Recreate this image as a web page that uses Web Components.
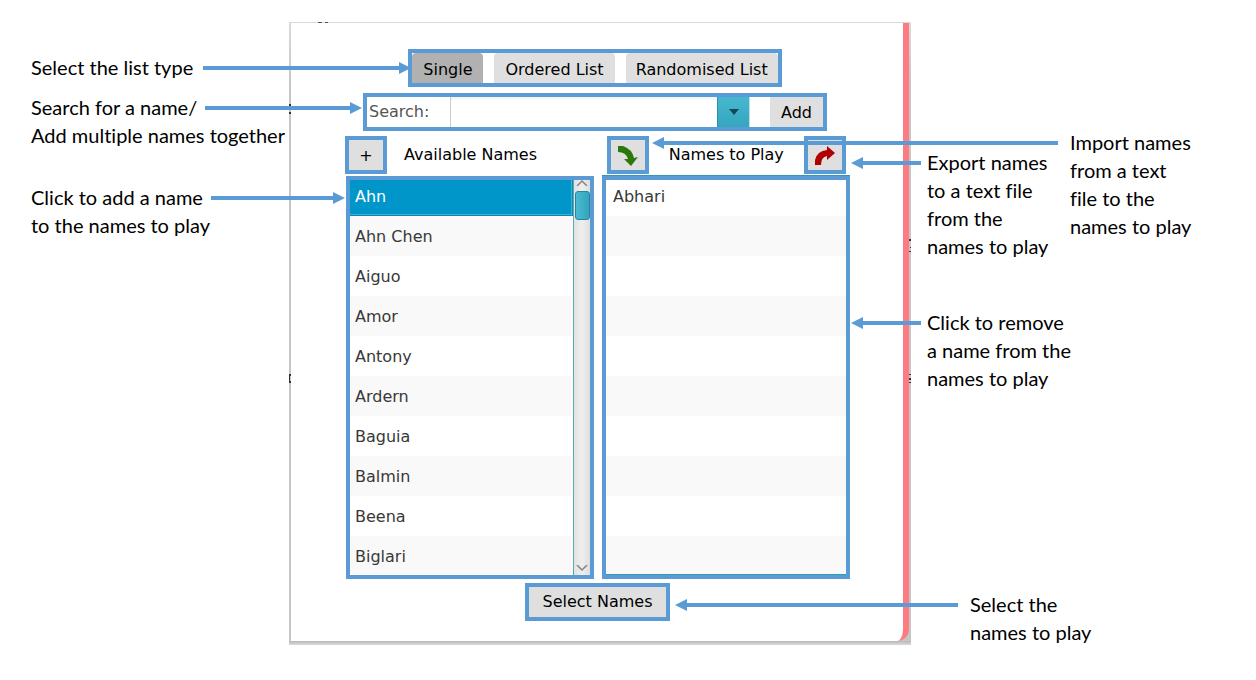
<!DOCTYPE html>
<html lang="en">
<head>
<meta charset="utf-8">
<title>Names list guide</title>
<style>
  body { margin: 0; background: #fff; }
</style>
</head>
<body>
<guide-page></guide-page>

<script>
const define = (name, html) => {
  const template = document.createElement('template');
  template.innerHTML = html;
  customElements.define(name, class extends HTMLElement {
    constructor() {
      super();
      this.attachShadow({ mode: 'open' }).append(template.content.cloneNode(true));
    }
  });
};

/* Blue outline drawn round an annotated part of the dialog */
define('high-light', `
  <style>
    :host { display: flex; box-sizing: border-box; border: 4px solid #5b9bd5; }
  </style>
  <slot></slot>`);

/* Grey flat button */
define('flat-button', `
  <style>
    :host { display: flex; }
    button {
      flex: 1; display: flex; align-items: center; justify-content: center;
      box-sizing: border-box; height: 30px; margin: 0; border: 0; padding: var(--drop, 2px) var(--pad, 11px) 0;
      background: var(--fill, #dfdfdf); color: #000; border-radius: var(--radius, 0);
      font: 16px/20px "DejaVu Sans", sans-serif; white-space: nowrap;
    }
  </style>
  <button type="button"><slot></slot></button>`);

/* Text note whose arrow leaves from its first line */
customElements.define('call-out', class extends HTMLElement {
  connectedCallback() {
    const length = Number(this.getAttribute('length'));
    const left = this.getAttribute('to') === 'left';
    const gap = Number(this.getAttribute('gap') || 12);
    this.attachShadow({ mode: 'open' }).innerHTML = `
      <style>
        :host { display: block; color: #000; font: 20px/28px Lato, sans-serif; font-variant-ligatures: none; white-space: nowrap; }
        .first { position: relative; display: inline-block; vertical-align: top; }
        svg { position: absolute; top: 8px; ${left ? 'right' : 'left'}: calc(100% + ${gap}px); ${left ? 'transform: scaleX(-1);' : ''} }
      </style>
      <div class="first"><slot name="first"></slot>
        <svg width="${length}" height="14" fill="#5b9bd5" aria-hidden="true">
          <path d="M0 5H${length - 12}V1L${length} 7L${length - 12} 13V9H0Z"/>
        </svg>
      </div>
      <div><slot></slot></div>`;
  }
});

define('list-tabs', `
  <style>
    :host { display: block; }
    high-light { gap: 11px; }
    flat-button { --radius: 4px 4px 0 0; --drop: 4px; }
    flat-button:last-child { --pad: 10px; }
    .on { --fill: #b1b1b1; }
  </style>
  <high-light>
    <flat-button class="on">Single</flat-button>
    <flat-button>Ordered List</flat-button>
    <flat-button>Randomised List</flat-button>
  </high-light>`);

define('search-bar', `
  <style>
    :host { display: block; width: 464px; max-width: 100%; }
    label { width: 83px; padding: 0 2px; box-sizing: border-box; color: #555; font: 16px/30px "DejaVu Sans", sans-serif; }
    input {
      flex: 1; min-width: 0; height: 30px; box-sizing: border-box; border: 0; border-left: 1px solid #ccc;
      background: linear-gradient(#f2f2f2, #fff 4px); font: 16px/20px "DejaVu Sans", sans-serif; outline: 0; border-radius: 0;
    }
    .drop {
      width: 33px; height: 30px; margin-right: 20px; padding: 0; border: 0; border-left: 1px solid #1e97a8; border-right: 1px solid #b9dfe6;
      background: linear-gradient(#45b8d0, #36a5be); display: flex; align-items: center; justify-content: center;
    }
  </style>
  <high-light>
    <label for="name">Search:</label>
    <input id="name" type="text">
    <button class="drop" type="button" aria-label="Show names">
      <svg width="10" height="6" aria-hidden="true"><path d="M0 0H10L5 6Z" fill="#154951"/></svg>
    </button>
    <flat-button>Add</flat-button>
  </high-light>`);

define('list-heads', `
  <style>
    :host { display: grid; grid-template-columns: 1fr 1fr; gap: 8px; align-items: center; }
    div { display: flex; align-items: center; }
    high-light { width: 42px; flex: none; }
    flat-button { flex: 1; --pad: 0; }
    h2 { margin: 0; font: 16px/36px "DejaVu Sans", sans-serif; color: #000; white-space: nowrap; }
    .from { gap: 17px; }
    .to { padding: 0 4px 0 5px; justify-content: space-between; }
    svg { display: block; }
  </style>
  <div class="from">
    <high-light><flat-button>+</flat-button></high-light>
    <h2>Available Names</h2>
  </div>
  <div class="to">
    <high-light><flat-button>
      <svg width="20" height="20" role="img" aria-label="Import"><path d="M0 0H5Q14 3 16 12L20 11L13 20L6 13L10 13Q8 6 0 6Z" fill="#2b780c"/></svg>
    </flat-button></high-light>
    <h2>Names to Play</h2>
    <high-light><flat-button>
      <svg width="20" height="20" role="img" aria-label="Export"><path d="M0 19V14Q2 5 12 4V0L20 7L12 14V10Q6 11 6 19Z" fill="#b00000"/></svg>
    </flat-button></high-light>
  </div>`);

customElements.define('name-list', class extends HTMLElement {
  connectedCallback() {
    const scroll = this.hasAttribute('scroll');
    const names = (this.getAttribute('names') || '').split(',');
    const rows = Array.from({ length: 10 }, (_, i) => names[i]
      ? `<li><button type="button"${scroll && i === 0 ? ' class="on"' : ''}>${names[i]}</button></li>`
      : '<li></li>').join('');
    const bar = scroll ? `
      <div class="bar" aria-hidden="true">
        <svg width="12" height="6"><path d="M1 6L6 1L11 6"/></svg>
        <i></i>
        <svg width="12" height="6"><path d="M1 0L6 5L11 0"/></svg>
      </div>` : '';
    this.attachShadow({ mode: 'open' }).innerHTML = `
      <style>
        :host { display: block; min-width: 0; ${scroll ? '' : 'box-shadow: 0 -1px #3796b5;'} }
        high-light { height: 403px; overflow: hidden; }
        ul {
          flex: 1; min-width: 0; height: 399px; box-sizing: border-box; margin: -4px 0 0; padding: 0; list-style: none;
          overflow: hidden; border-bottom: 1px solid ${scroll ? '#fff' : '#2b9fb2'};
        }
        li { height: 40px; background: #fff; }
        li:nth-child(even) { background: #f9f9f9; }
        button {
          display: block; width: 100%; height: 40px; margin: 0; border: 0; padding: 2px ${scroll ? 5 : 7}px 0;
          background: none; color: #383838; text-align: left; font: 16px/38px "DejaVu Sans", sans-serif;
        }
        .on { background: #0096c9; color: #fff; box-shadow: inset -1px -1px #0e87b2, inset -2px -2px #3db0d8; }
        .bar {
          display: flex; flex-direction: column; align-items: center; width: 17px; box-sizing: border-box;
          border-left: 1px solid #5aa9b9; background: linear-gradient(90deg, #e2e2e2, #efefef 50%, #dedede); padding-bottom: 4px;
        }
        .bar svg { fill: none; stroke: #858585; stroke-width: 1.5; }
        .bar i {
          width: 15px; height: 29px; margin: 5px 0 auto; box-sizing: border-box; border: 1px solid #268797; border-radius: 3px;
          background: linear-gradient(90deg, #4abbd2, #35a4be);
        }
      </style>
      <high-light><ul>${rows}</ul>${bar}</high-light>`;
  }
});

define('names-dialog', `
  <style>
    :host {
      position: relative; display: block; padding: 1px 2px 4px;
      background: linear-gradient(#dadada, #c6c6c6 60px, #c6c6c6 calc(100% - 4px), #b9b9b9 calc(100% - 4px), #dadada);
    }
    .sheet {
      display: flex; flex-direction: column; gap: 5px; padding: 26px 53px 20px 54px;
      background: #fff; border-right: 6px solid #ff7b82; border-bottom-right-radius: 12px;
    }
    .top { display: flex; flex-direction: column; align-items: center; gap: 6px; padding-right: 5px; }
    .body { display: grid; grid-template-columns: 1fr 1fr; gap: 8px; padding-left: 1px; margin: -3px 0 -1px; }
    .end { align-self: center; }
    .end flat-button { --pad: 14px; --drop: 0; }
    .specks { position: absolute; top: 0; width: 2px; height: 100%; fill: #333; }
    .near { left: 0; }
    .far { right: 0; }
    .over { position: absolute; top: 0; left: 29px; fill: #555; }
  </style>
  <svg class="over" width="11" height="1" aria-hidden="true"><path d="M0 0h4v1h-4zM7 0h3v1h-3z"/></svg>
  <svg class="specks near" aria-hidden="true"><path d="M0 82h2v2h-2zM0 90h2v2h-2zM0 352h2v2h-2zM0 354h1v5h-1zM0 359h2v2h-2z"/></svg>
  <svg class="specks far" aria-hidden="true"><path d="M0 217h2v2h-2zM1 225h1v1h-1zM0 229h2v1h-2zM0 352h2v1h-2zM0 356h2v2h-2zM0 360h2v1h-2z"/></svg>
  <div class="sheet">
    <div class="top"><list-tabs></list-tabs><search-bar></search-bar></div>
    <list-heads></list-heads>
    <div class="body">
      <name-list scroll names="Ahn,Ahn Chen,Aiguo,Amor,Antony,Ardern,Baguia,Balmin,Beena,Biglari"></name-list>
      <name-list names="Abhari"></name-list>
    </div>
    <high-light class="end"><flat-button>Select Names</flat-button></high-light>
  </div>`);

define('guide-page', `
  <style>
    :host {
      display: grid; grid-template-columns: minmax(0, 289fr) minmax(0, 622fr) minmax(0, 345fr);
      align-items: start; padding: 22px 0 35px;
    }
    aside { position: relative; z-index: 1; display: flex; flex-direction: column; align-items: flex-start; }
    .left { padding: 31px 0 0 31px; }
    .left call-out:nth-child(2) { margin-top: 12px; }
    .left call-out:nth-child(3) { margin-top: 34px; }
    .right { padding: 106px 0 0 16px; }
    .pair { display: grid; grid-template-columns: 143px auto; }
    .pair call-out:first-child { margin-top: 20px; }
    .remove { margin-top: 48px; }
    .select { margin: 198px 0 0 43px; }
  </style>
  <aside class="left">
    <call-out length="208" gap="10"><span slot="first">Select the list type</span></call-out>
    <call-out length="157" gap="8"><span slot="first">Search for a name/</span>Add multiple names together</call-out>
    <call-out length="134" gap="8"><span slot="first">Click to add a name</span>to the names to play</call-out>
  </aside>
  <names-dialog></names-dialog>
  <aside class="right">
    <div class="pair">
      <call-out to="left" length="70" gap="6"><span slot="first">Export names</span>to a text file<br>from the<br>names to play</call-out>
      <call-out to="left" length="406"><span slot="first">Import names</span>from a text<br>file to the<br>names to play</call-out>
    </div>
    <call-out class="remove" to="left" length="70" gap="6"><span slot="first">Click to remove</span>a name from the<br>names to play</call-out>
    <call-out class="select" to="left" length="283"><span slot="first">Select the</span>names to play</call-out>
  </aside>`);
</script>
</body>
</html>
